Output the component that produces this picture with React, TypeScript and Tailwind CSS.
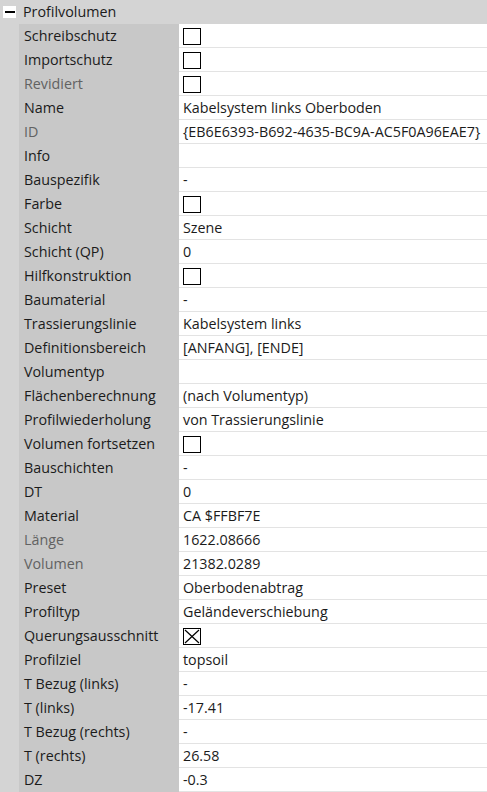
import React from 'react';

type Row = {
  label: string;
  value?: string;
  check?: 'empty' | 'x';
  disabled?: boolean;
};

const rows: Row[] = [
  { label: 'Schreibschutz', check: 'empty' },
  { label: 'Importschutz', check: 'empty' },
  { label: 'Revidiert', check: 'empty', disabled: true },
  { label: 'Name', value: 'Kabelsystem links Oberboden' },
  { label: 'ID', value: '{EB6E6393-B692-4635-BC9A-AC5F0A96EAE7}', disabled: true },
  { label: 'Info', value: '' },
  { label: 'Bauspezifik', value: '-' },
  { label: 'Farbe', check: 'empty' },
  { label: 'Schicht', value: 'Szene' },
  { label: 'Schicht (QP)', value: '0' },
  { label: 'Hilfkonstruktion', check: 'empty' },
  { label: 'Baumaterial', value: '-' },
  { label: 'Trassierungslinie', value: 'Kabelsystem links' },
  { label: 'Definitionsbereich', value: '[ANFANG], [ENDE]' },
  { label: 'Volumentyp', value: '' },
  { label: 'Flächenberechnung', value: '(nach Volumentyp)' },
  { label: 'Profilwiederholung', value: 'von Trassierungslinie' },
  { label: 'Volumen fortsetzen', check: 'empty' },
  { label: 'Bauschichten', value: '-' },
  { label: 'DT', value: '0' },
  { label: 'Material', value: 'CA $FFBF7E' },
  { label: 'Länge', value: '1622.08666', disabled: true },
  { label: 'Volumen', value: '21382.0289', disabled: true },
  { label: 'Preset', value: 'Oberbodenabtrag' },
  { label: 'Profiltyp', value: 'Geländeverschiebung' },
  { label: 'Querungsausschnitt', check: 'x' },
  { label: 'Profilziel', value: 'topsoil' },
  { label: 'T Bezug (links)', value: '-' },
  { label: 'T (links)', value: '-17.41' },
  { label: 'T Bezug (rechts)', value: '-' },
  { label: 'T (rechts)', value: '26.58' },
  { label: 'DZ', value: '-0.3' },
];

const CheckBox = ({ crossed }: { crossed?: boolean }) => (
  <div className="w-[18px] h-[17px] border border-black bg-white relative">
    {crossed && (
      <svg className="absolute inset-0" width="16" height="15" viewBox="0 0 16 15">
        <path d="M1 1 L15 14 M15 1 L1 14" stroke="#000" strokeWidth="1.2" />
      </svg>
    )}
  </div>
);

export default function App() {
  return (
    <div
      className="w-[487px] h-[792px] overflow-hidden bg-[#d4d4d4] text-[14.3px] text-[#1b1b1b]"
      style={{ fontFamily: '"Segoe UI", "Open Sans", sans-serif' }}
    >
      <div className="h-6 flex items-center">
        <div className="w-[19px] flex justify-center">
          <div className="w-[13px] h-[12px] bg-white flex items-center justify-center">
            <div className="w-[10px] h-[2px] bg-black" />
          </div>
        </div>
        <span className="pl-[4px] pt-[1px] leading-none">Profilvolumen</span>
      </div>
      {rows.map((r) => (
        <div key={r.label} className="h-6 flex">
          <div className="w-[19px] shrink-0" />
          <div
            className={`w-[160px] shrink-0 bg-[#c8c8c8] pl-[5px] pt-[1px] flex items-center leading-none ${
              r.disabled ? 'text-[#626262]' : ''
            }`}
          >
            {r.label}
          </div>
          <div className="flex-1 bg-white border-b border-[#e3e3e3] pl-[4px] pt-[1px] flex items-center leading-none whitespace-nowrap overflow-hidden">
            {r.check ? <CheckBox crossed={r.check === 'x'} /> : r.value}
          </div>
        </div>
      ))}
    </div>
  );
}
